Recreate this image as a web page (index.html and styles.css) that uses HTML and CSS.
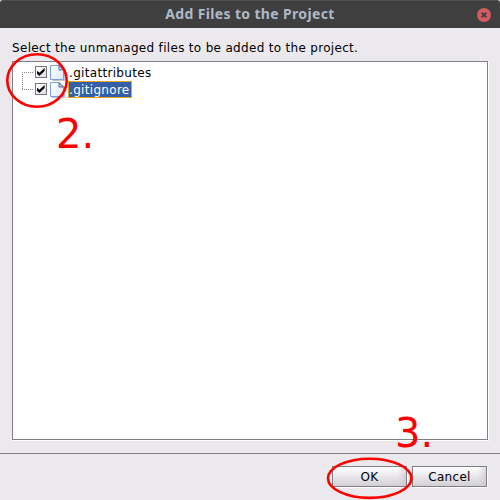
FILE: index.html
```html
<!DOCTYPE html>
<html lang="en">
<head>
<meta charset="utf-8">
<title>Add Files to the Project</title>
<link rel="stylesheet" href="styles.css">
</head>
<body>
<div class="dialog">
  <header class="titlebar">
    <h1 class="title">Add Files to the Project</h1>
    <svg class="close" width="14" height="14" viewBox="0 0 14 14"><circle cx="7" cy="7" r="7" fill="#d35b62"/><path d="M4.6 4.6 9.4 9.4M9.4 4.6 4.6 9.4" stroke="#413f3f" stroke-width="1.9"/></svg>
  </header>
  <main class="content">
    <p class="prompt">Select the unmanaged files to be added to the project.</p>
    <div class="tree">
      <div class="row">
        <span class="branch first"></span>
        <span class="check"><svg width="10" height="10" viewBox="0 0 10 10"><path d="M1 3.8 3.4 5.8 8.6 1V4L3.4 9 1 6.8Z" fill="#000"/></svg></span>
        <svg class="file" width="15" height="17" viewBox="0 0 15 17"><defs><linearGradient id="paper" x2="1" y2="1"><stop stop-color="#fff"/><stop offset="1" stop-color="#dbe8fb"/></linearGradient></defs><path d="M2 16.5H14.5V7" fill="none" stroke="#c4c2c6"/><path d="M.5 1.5H9L13.5 6V15.5H.5Z" fill="url(#paper)" stroke="#7c9fdb"/><path d="M9 1.5V6H13.5Z" fill="#c3d4f1" stroke="#53689d"/></svg>
        <span class="name">.gitattributes</span>
      </div>
      <div class="row">
        <span class="branch last"></span>
        <span class="check"><svg width="10" height="10" viewBox="0 0 10 10"><path d="M1 3.8 3.4 5.8 8.6 1V4L3.4 9 1 6.8Z" fill="#000"/></svg></span>
        <svg class="file" width="15" height="17" viewBox="0 0 15 17"><path d="M2 16.5H14.5V7" fill="none" stroke="#c4c2c6"/><path d="M.5 1.5H9L13.5 6V15.5H.5Z" fill="url(#paper)" stroke="#7c9fdb"/><path d="M9 1.5V6H13.5Z" fill="#c3d4f1" stroke="#53689d"/></svg>
        <span class="name selected">.gitignore</span>
      </div>
    </div>
  </main>
  <footer class="actions">
    <button class="button">OK</button>
    <button class="button">Cancel</button>
  </footer>
  <svg class="annotations" width="500" height="500" viewBox="0 0 500 500">
    <ellipse cx="37" cy="80.5" rx="29.7" ry="26.3"/>
    <ellipse cx="369.7" cy="478.3" rx="41.7" ry="19.6"/>
    <text x="56" y="148">2.</text>
    <text x="395" y="447">3.</text>
  </svg>
</div>
</body>
</html>
```
FILE: styles.css
```css
* { box-sizing: border-box; }
body { margin: 0; background: #ebe9ee; }
.dialog {
  position: relative;
  display: flex;
  flex-direction: column;
  width: 500px;
  height: 500px;
  overflow: hidden;
  background: #ebe9ee;
  color: #000;
  font: 12px/17px "DejaVu Sans", sans-serif;
  letter-spacing: 0.315px;
}
.titlebar {
  display: grid;
  grid-template-columns: 1fr auto 1fr;
  align-items: center;
  height: 28px;
  padding: 0 9px;
  background: #3f3f3f;
  border-top: 1px solid #4d4d4d;
  border-radius: 3px 3px 0 0;
}
.title {
  grid-column: 2;
  margin: 0;
  padding-bottom: 2px;
  color: #aeb9c6;
  font: bold 14px/20px "Noto Sans", sans-serif;
  letter-spacing: 0.35px;
  white-space: nowrap;
}
.close { justify-self: end; }
.content {
  flex: 1;
  display: flex;
  flex-direction: column;
  padding: 12px 12px 13px;
}
.prompt { margin: 0; height: 21px; white-space: nowrap; }
.tree {
  flex: 1;
  padding: 2px 0 0 9px;
  background: #fff;
  border: 1px solid #807e83;
  box-shadow: 1px 1px #fff;
}
.row { display: flex; height: 17px; }
.branch { width: 13px; height: 17px; }
.first { background: repeating-linear-gradient(90deg, #888 0 1px, transparent 1px 2px) 0 8px / 12px 1px no-repeat, repeating-linear-gradient(#888 0 1px, transparent 1px 2px) 0 8px / 1px 9px no-repeat; }
.last { background: repeating-linear-gradient(90deg, #888 0 1px, transparent 1px 2px) 0 8px / 12px 1px no-repeat, repeating-linear-gradient(#888 0 1px, transparent 1px 2px) 0 1px / 1px 8px no-repeat; }
.check {
  width: 12px;
  height: 12px;
  margin: 2px 3px 0 0;
  border: 1px solid #77757a;
  background: linear-gradient(135deg, #fff, #e2e0e6);
}
.check svg { display: block; }
.file { margin-right: 3px; }
.name { height: 17px; padding: 0 1px 0 0; border: 1px solid transparent; line-height: 16px; }
.selected { width: 64px; color: #fff; background: #335ea8; border-color: #eda01e; }
.actions {
  display: flex;
  justify-content: flex-end;
  gap: 5px;
  height: 47px;
  padding: 12px 13px 0 0;
  border-top: 1px solid #807e83;
}
.button {
  width: 75px;
  height: 21px;
  padding: 1px 0 0;
  border: 1px solid #807e83;
  background: linear-gradient(90deg, transparent 88%, #c9c7cb99), linear-gradient(#fff, #ebe9ed 45%, #d2d0d4);
  box-shadow: 1px 1px #fff;
  color: #000;
  font: 12px/18px "DejaVu Sans", sans-serif;
  letter-spacing: 0.3px;
}
.annotations { position: absolute; inset: 0; pointer-events: none; letter-spacing: 0; }
.annotations ellipse { fill: none; stroke: #f00; stroke-width: 2.6; }
.annotations text { fill: #f00; font: 40px "DejaVu Sans", sans-serif; }
```
